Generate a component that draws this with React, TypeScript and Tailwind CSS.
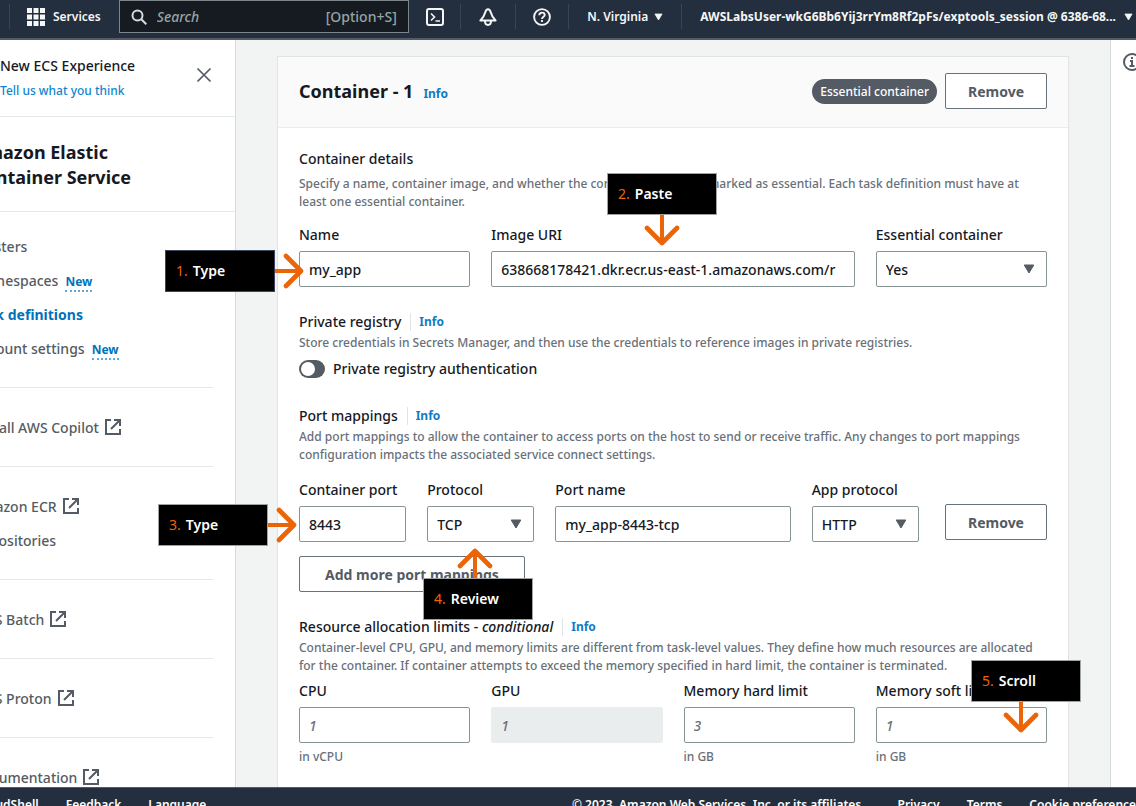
import type { ReactNode } from "react";

function Caret({ className = "" }: { className?: string }) {
  return (
    <svg viewBox="0 0 12 10" className={className} fill="currentColor" aria-hidden="true">
      <path d="M1.2 1h9.6L6 9z" stroke="currentColor" strokeWidth="1" strokeLinejoin="round" />
    </svg>
  );
}

function External() {
  return (
    <svg viewBox="0 0 16 16" className="size-4 shrink-0" fill="none" stroke="currentColor" strokeWidth="2" aria-hidden="true">
      <path d="M6 1H1v14h14v-5" />
      <path d="M9 1h6v6M15 1 6 10" />
    </svg>
  );
}

function Info() {
  return (
    <a href="#info" className="text-[12px] leading-[22px] font-bold text-[#0f7cc4]">
      Info
    </a>
  );
}

function Divider() {
  return <div className="h-[25px] w-px bg-[#3a4553]" />;
}

function TopBar() {
  return (
    <header className="flex h-[40px] shrink-0 items-start justify-between border-b-2 border-[#545b64] bg-[#232f3e] text-[12px] font-semibold text-[#f5f6f6]">
      <div className="flex min-w-0 flex-1 items-start pl-[9px]">
        <div className="mt-1 flex items-center">
          <Divider />
          <button className="ml-[17px] flex items-center gap-2 leading-[24px]">
            <svg viewBox="0 0 18 18" className="size-[18px]" fill="currentColor" aria-hidden="true">
              <path d="M0 0h5v5H0zM6.500 0h5v5h-5zM13 0h5v5h-5zM0 6.500h5v5H0zM6.500 6.500h5v5h-5zM13 6.500h5v5h-5zM0 13h5v5H0zM6.500 13h5v5h-5zM13 13h5v5h-5z" />
            </svg>
            Services
          </button>
        </div>
        <label className="ml-[18px] flex h-[33px] min-w-0 max-w-[290px] flex-1 items-center border border-[#7c858a] bg-[#161a21] px-[11px] text-[#95a5a6]">
          <svg viewBox="0 0 16 16" className="size-4 shrink-0" fill="none" stroke="#d5dbdb" strokeWidth="2" aria-hidden="true">
            <circle cx="6.500" cy="6.500" r="5" />
            <path d="m10.300 10.300 5 5" />
          </svg>
          <input
            type="search"
            aria-label="Search"
            placeholder="Search"
            className="ml-[10px] min-w-0 flex-1 bg-transparent text-[14px] font-medium italic outline-none placeholder:text-[#95a5a6]"
          />
          <span className="text-[14px] font-medium">[Option+S]</span>
        </label>
      </div>
      <div className="mt-1 flex h-[25px] items-center whitespace-nowrap">
        <button aria-label="CloudShell" className="mx-4">
          <svg viewBox="0 0 18 18" className="size-[18px]" fill="none" stroke="currentColor" strokeWidth="2" aria-hidden="true">
            <rect x="1" y="1" width="16" height="16" rx="2" />
            <path d="m5 5.500 3.500 3.500L5 12.500M9.500 13H14" strokeWidth="1.600" />
          </svg>
        </button>
        <Divider />
        <button aria-label="Notifications" className="mx-[18px]">
          <svg viewBox="0 0 18 18" className="size-[18px]" fill="none" stroke="currentColor" strokeWidth="2" strokeLinejoin="round" aria-hidden="true">
            <path d="M9 1.200C7.600 1.200 6.800 2.500 6.300 4.200 5.500 7 4.800 9.500 1.400 12.500h15.200C13.200 9.500 12.500 7 11.700 4.200 11.200 2.500 10.400 1.200 9 1.200z" />
            <path d="M6 13c0 2.500 1.200 3.900 3 3.900s3-1.400 3-3.900" />
          </svg>
        </button>
        <Divider />
        <button aria-label="Support" className="mx-[17px]">
          <svg viewBox="0 0 18 18" className="size-[18px]" fill="none" stroke="currentColor" strokeWidth="1.900" aria-hidden="true">
            <circle cx="9" cy="9" r="7.900" />
            <path d="M6.300 7.300C6.300 5.500 7.500 4.600 9 4.600s2.700 1 2.700 2.400C11.700 8.700 9 8.800 9 11M9 12v1.900" />
          </svg>
        </button>
        <Divider />
        <button className="mx-[18px] flex items-center gap-[6px]">
          N. Virginia
          <Caret className="h-2 w-[9px]" />
        </button>
        <Divider />
        <button className="mr-[3px] ml-[18px] flex items-center gap-2 font-bold">
          AWSLabsUser-wkG6Bb6Yij3rrYm8Rf2pFs/exptools_session @ 6386-68...
          <Caret className="h-2 w-[9px]" />
        </button>
      </div>
    </header>
  );
}

function NavItem({ children, active, isNew, external }: { children: ReactNode; active?: boolean; isNew?: boolean; external?: boolean }) {
  return (
    <li className="flex h-[34px] items-center whitespace-nowrap">
      <a href="#nav" className={active ? "font-bold text-[#0073bb]" : "flex items-center gap-[6px] text-[#545b64]"}>
        {children}
        {external && <External />}
      </a>
      {isNew && (
        <a href="#new" className="mt-[5px] ml-[7px] border-b-2 border-dotted border-[#5fa9d8] text-[12px] leading-[16px] font-bold text-[#0073bb]">
          New
        </a>
      )}
    </li>
  );
}

function NavGroup({ children }: { children: ReactNode }) {
  return <ul className="mr-[22px] border-b border-[#e4e8e8] py-[22px]">{children}</ul>;
}

function SideNav() {
  return (
    <nav className="w-[236px] shrink-0 overflow-hidden border-r border-[#d5dbdb] bg-white text-[14px]">
      <div className="flex justify-between border-b border-[#e4e8e8] pr-[23px] pb-[11px] pt-[15px]">
        <div className="whitespace-nowrap">
          <p className="leading-[22px] text-[#16191f]">New ECS Experience</p>
          <a href="#feedback" className="block text-[12px] leading-[28px] font-medium text-[#0f86cf]">
            Tell us what you think
          </a>
        </div>
        <button aria-label="Close" className="mt-[12px] h-4 text-[#545b64]">
          <svg viewBox="0 0 16 16" className="size-4" fill="none" stroke="currentColor" strokeWidth="1.700" aria-hidden="true">
            <path d="m1.500 1.500 13 13M14.500 1.500l-13 13" />
          </svg>
        </button>
      </div>
      <h2 className="-ml-[27px] border-b border-[#e4e8e8] pt-[23px] pb-[21px] text-[18px] leading-[25px] font-bold text-[#16191f]">
        Amazon Elastic
        <br />
        Container Service
      </h2>
      <div className="-ml-[27px]">
        <ul className="mr-[22px] border-b border-[#e4e8e8] pb-[22px] pt-[17px]">
          <NavItem>Clusters</NavItem>
          <NavItem isNew>Namespaces</NavItem>
          <NavItem active>Task definitions</NavItem>
          <NavItem isNew>Account settings</NavItem>
        </ul>
        <NavGroup>
          <NavItem external>Install AWS Copilot</NavItem>
        </NavGroup>
        <NavGroup>
          <NavItem external>Amazon ECR</NavItem>
          <NavItem>Repositories</NavItem>
        </NavGroup>
        <NavGroup>
          <NavItem external>AWS Batch</NavItem>
        </NavGroup>
        <NavGroup>
          <NavItem external>AWS Proton</NavItem>
        </NavGroup>
        <NavGroup>
          <NavItem external>Documentation</NavItem>
        </NavGroup>
      </div>
    </nav>
  );
}

const controlBox = "h-9 w-full min-w-0 rounded-[2px] border border-[#879596] bg-white px-[9px] text-[14px] font-medium text-[#16191f]";

function TextField({
  id,
  label,
  value,
  placeholder,
  hint,
  disabled,
  className = "",
}: {
  id: string;
  label: string;
  value?: string;
  placeholder?: string;
  hint?: string;
  disabled?: boolean;
  className?: string;
}) {
  return (
    <div className={`min-w-0 ${className}`}>
      <label htmlFor={id} className="block whitespace-nowrap leading-[22px]">
        {label}
      </label>
      <input
        id={id}
        type="text"
        defaultValue={value}
        placeholder={placeholder}
        disabled={disabled}
        className={`${controlBox} mt-[5px] block placeholder:italic placeholder:text-[#687078] disabled:border-[#eaeded] disabled:bg-[#eaeded]`}
      />
      {hint && <p className="mt-[5px] text-[12px] leading-[18px] text-[#687078]">{hint}</p>}
    </div>
  );
}

function SelectField({ id, label, options }: { id: string; label: string; options: string[] }) {
  return (
    <div className="min-w-0">
      <label htmlFor={id} className="block whitespace-nowrap leading-[22px]">
        {label}
      </label>
      <div className="relative mt-[5px]">
        <select id={id} className={`${controlBox} appearance-none`}>
          {options.map((o) => (
            <option key={o}>{o}</option>
          ))}
        </select>
        <Caret className="pointer-events-none absolute right-3 top-[13px] h-[10px] w-3 text-[#545b64]" />
      </div>
    </div>
  );
}

function SectionTitle({ children }: { children: ReactNode }) {
  return (
    <div className="flex items-center">
      <h3 className="leading-[22px]">{children}</h3>
      <span className="ml-[9px] mr-[8px] h-[18px] w-px bg-[#e1e4e4]" />
      <Info />
    </div>
  );
}

function Description({ children }: { children: ReactNode }) {
  return <p className="mt-px text-[12px] leading-[18px] text-[#687078]">{children}</p>;
}

function Button({ children, className = "px-[22px]" }: { children: ReactNode; className?: string }) {
  return (
    <button
      className={`h-9 rounded-[2px] border border-[#687078] bg-white text-[14px] font-bold whitespace-nowrap text-[#545b64] ${className}`}
    >
      {children}
    </button>
  );
}

function ContainerPanel() {
  return (
    <section className="mx-[41px] mt-4 flex-1 border border-[#e1e4e4] bg-white">
      <div className="flex h-[71px] items-center justify-between border-b border-[#eaeded] bg-[#fafafa] px-[21px] pb-[2px]">
        <div className="flex items-baseline gap-[10px]">
          <h1 className="text-[18px] leading-[28px] font-bold">Container - 1</h1>
          <Info />
        </div>
        <div className="flex items-center gap-2">
          <span className="rounded-full bg-[#545b64] px-2 text-[12px] leading-[25px] font-medium text-white">Essential container</span>
          <Button>Remove</Button>
        </div>
      </div>
      <div className="px-[21px] pt-5 pb-[21px]">
        <h3 className="leading-[22px]">Container details</h3>
        <div className="mt-[5px]">
          <Description>
            Specify a name, container image, and whether the container should be marked as essential. Each task definition must have at
            least one essential container.
          </Description>
        </div>
        <div className="mt-[13px] grid grid-cols-4 gap-x-[21px]">
          <TextField id="name" label="Name" value="my_app" />
          <TextField id="uri" label="Image URI" value="638668178421.dkr.ecr.us-east-1.amazonaws.com/r" className="col-span-2" />
          <SelectField id="essential" label="Essential container" options={["Yes", "No"]} />
        </div>

        <div className="mt-6">
          <SectionTitle>Private registry</SectionTitle>
          <Description>Store credentials in Secrets Manager, and then use the credentials to reference images in private registries.</Description>
          <label className="mt-[6px] flex items-center gap-2 leading-[22px]">
            <input type="checkbox" role="switch" className="peer sr-only" />
            <span className="flex h-[18px] w-[26px] items-center rounded-full bg-[#545b64] px-[2px]">
              <span className="size-[14px] rounded-full bg-white" />
            </span>
            Private registry authentication
          </label>
        </div>

        <div className="mt-[25px]">
          <SectionTitle>Port mappings</SectionTitle>
          <Description>
            Add port mappings to allow the container to access ports on the host to send or receive traffic. Any changes to port mappings
            configuration impacts the associated service connect settings.
          </Description>
          <div className="mt-[15px] grid grid-cols-6 gap-x-[21px]">
            <TextField id="port" label="Container port" value="8443" />
            <SelectField id="protocol" label="Protocol" options={["TCP", "UDP"]} />
            <TextField id="port-name" label="Port name" value="my_app-8443-tcp" className="col-span-2" />
            <SelectField id="app-protocol" label="App protocol" options={["HTTP", "HTTP2", "gRPC"]} />
            <div className="pt-[25px] text-right">
              <Button>Remove</Button>
            </div>
          </div>
          <Button className="mt-[14px] px-[25px]">Add more port mappings</Button>
        </div>

        <div className="mt-6">
          <SectionTitle>
            Resource allocation limits - <em>conditional</em>
          </SectionTitle>
          <Description>
            Container-level CPU, GPU, and memory limits are different from task-level values. They define how much resources are allocated
            for the container. If container attempts to exceed the memory specified in hard limit, the container is terminated.
          </Description>
          <div className="mt-[5px] grid grid-cols-4 gap-x-[21px]">
            <TextField id="cpu" label="CPU" placeholder="1" hint="in vCPU" />
            <TextField id="gpu" label="GPU" placeholder="1" disabled />
            <TextField id="hard" label="Memory hard limit" placeholder="3" hint="in GB" />
            <TextField id="soft" label="Memory soft limit" placeholder="1" hint="in GB" />
          </div>
        </div>
      </div>
    </section>
  );
}

function Arrow({ className }: { className: string }) {
  return (
    <svg viewBox="0 0 36 38" className={`absolute h-[38px] w-9 ${className}`} fill="none" stroke="#ec6408" strokeWidth="4" aria-hidden="true">
      <path d="M18 4v30" />
      <path d="m3 19 15 15 15-15" strokeWidth="4.600" strokeLinecap="round" strokeLinejoin="round" />
    </svg>
  );
}

function Callout({ step, text, box, arrow }: { step: number; text: string; box: string; arrow: string }) {
  return (
    <div className={`absolute h-[42px] w-[110px] ${box}`}>
      <Arrow className={arrow} />
      <div className="relative flex size-full items-center gap-[5px] border border-inherit bg-black pb-[2px] pl-[10px] text-[14px] font-semibold text-white">
        <span className="font-normal text-[#ec6408]">{step}.</span>
        {text}
      </div>
    </div>
  );
}

const down = "left-[37px] top-[36px]";
const right = "left-[103px] top-[2px] -rotate-90";
const up = "left-[34px] -top-[31px] rotate-180";

export default function App() {
  return (
    <div className="relative flex h-screen flex-col overflow-hidden bg-[#f2f3f3] font-['Noto_Sans',sans-serif] text-[14px] font-medium text-[#16191f]">
      <TopBar />
      <div className="flex min-h-0 flex-1 overflow-hidden">
        <SideNav />
        <main className="flex min-w-0 flex-1 flex-col overflow-hidden">
          <ContainerPanel />
        </main>
        <aside className="w-[26px] shrink-0 overflow-hidden border-l border-[#d5dbdb] bg-white pl-3 pt-[13px]">
          <button aria-label="Open help" className="text-[#545b64]">
            <svg viewBox="0 0 18 18" className="size-[18px]" fill="none" stroke="currentColor" strokeWidth="2" aria-hidden="true">
              <circle cx="9" cy="9" r="8" />
              <path d="M7 8h2v5M6.500 13h5M9 4v2" />
            </svg>
          </button>
        </aside>
      </div>
      <footer className="flex h-[19px] shrink-0 justify-between overflow-hidden whitespace-nowrap border-t border-[#545b64] bg-[#232f3e] pt-[9px] text-[12px] leading-[16px] font-semibold text-white">
        <div className="-ml-[23px] flex gap-[27px]">
          <button>CloudShell</button>
          <button>Feedback</button>
          <button>Language</button>
        </div>
        <div className="-mr-[6px] flex">
          <span className="mr-[33px]">© 2023, Amazon Web Services, Inc. or its affiliates.</span>
          <a href="#privacy" className="mr-[27px]">
            Privacy
          </a>
          <a href="#terms" className="mr-[27px]">
            Terms
          </a>
          <a href="#cookies">Cookie preferences</a>
        </div>
      </footer>
      <Callout step={1} text="Type" box="left-[165px] top-[250px] border-[#3b4660]" arrow={right} />
      <Callout step={2} text="Paste" box="left-[607px] top-[173px] border-[#a0a3a6]" arrow={down} />
      <Callout step={3} text="Type" box="left-[158px] top-[504px] border-[#a0a3a6]" arrow={right} />
      <Callout step={4} text="Review" box="left-[423px] top-[578px] border-[#a0a3a6]" arrow={up} />
      <Callout step={5} text="Scroll" box="left-[971px] top-[660px] border-[#a0a3a6]" arrow="left-[32px] top-[36px]" />
    </div>
  );
}
